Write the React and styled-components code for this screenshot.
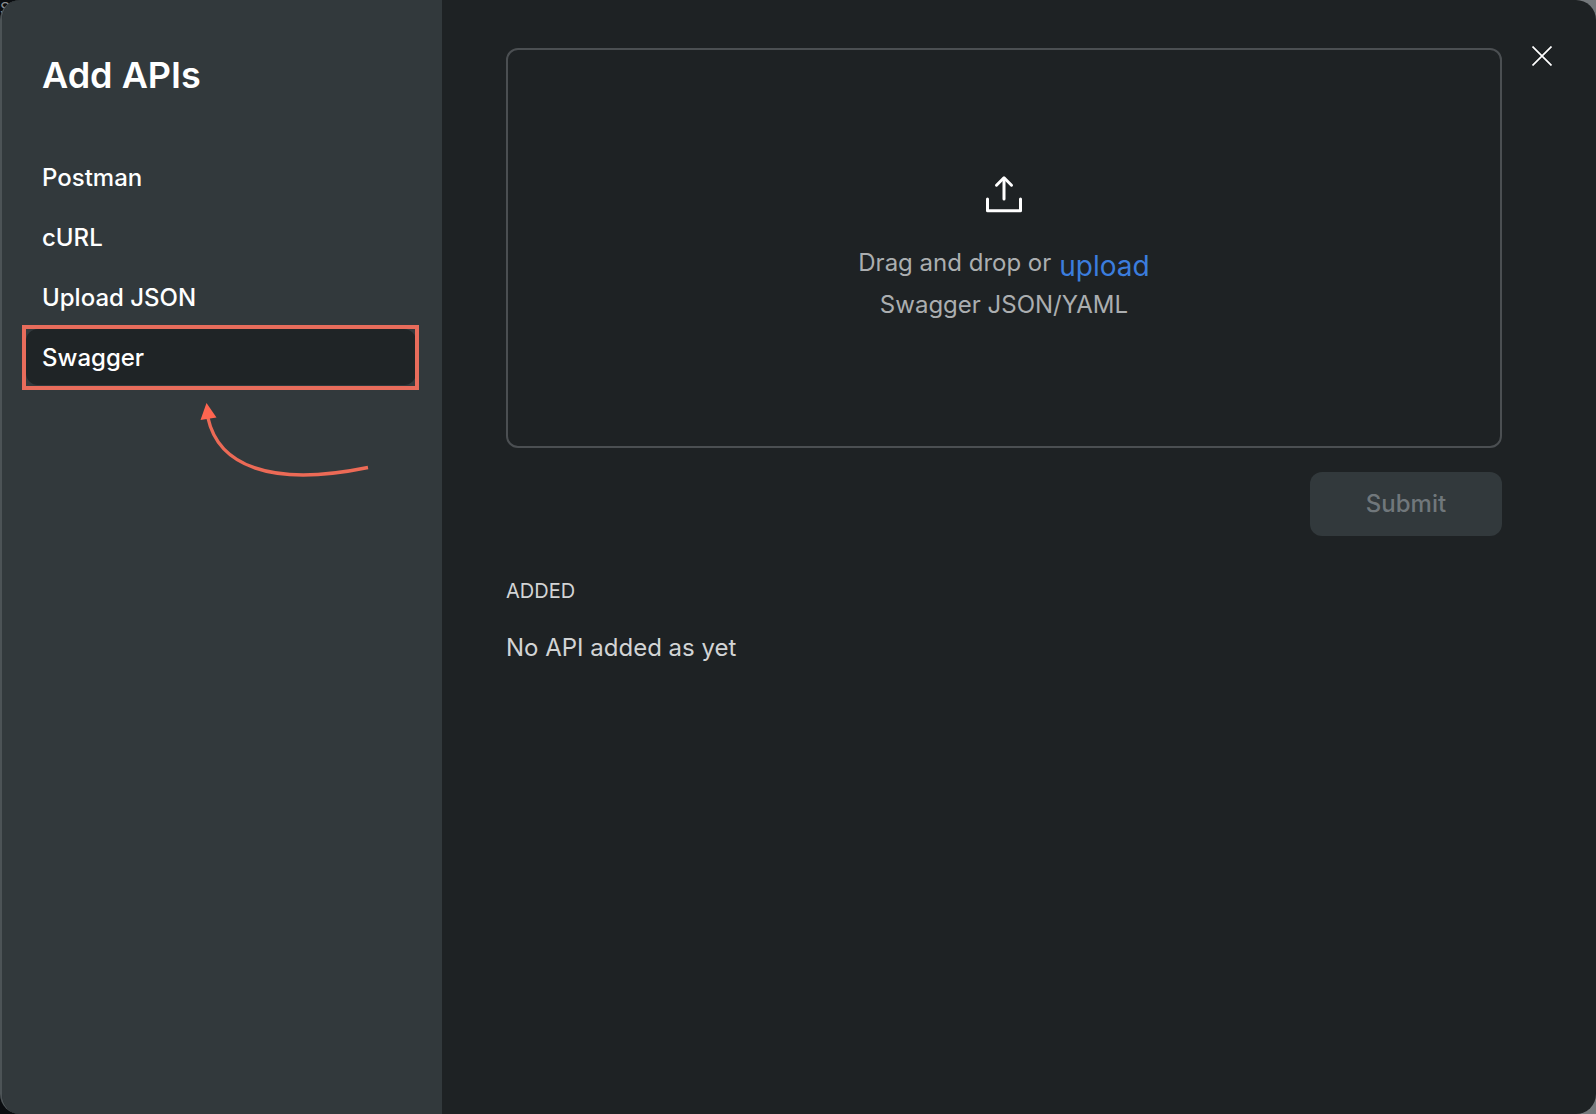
import React, { useState } from "react";
import styled, { createGlobalStyle } from "styled-components";

const sources = ["Postman", "cURL", "Upload JSON", "Swagger"];

const App = () => {
  const [active, setActive] = useState("Swagger");

  return (
    <Backdrop>
      <GlobalStyle />
      <PageText aria-hidden="true">S</PageText>
      <Modal role="dialog" aria-label="Add APIs">
        <Sidebar>
          <Title>Add APIs</Title>
          <Menu>
            {sources.map((source) => (
              <MenuItem key={source}>
                <MenuBtn
                  type="button"
                  $active={source === active}
                  onClick={() => setActive(source)}
                >
                  {source}
                </MenuBtn>
                {source === active && <Callout />}
              </MenuItem>
            ))}
          </Menu>
        </Sidebar>

        <Content>
          <Main>
            <DropZone>
              <UploadIcon />
              <DropText>
                <DropLine>
                  <span>Drag and drop or</span>
                  <UploadBtn type="button">upload</UploadBtn>
                </DropLine>
                <span>Swagger JSON/YAML</span>
              </DropText>
            </DropZone>
            <Submit type="submit" disabled>
              Submit
            </Submit>
            <AddedTitle>ADDED</AddedTitle>
            <AddedText>No API added as yet</AddedText>
          </Main>
          <CloseBtn type="button" aria-label="Close">
            <svg width="20" height="20" viewBox="0 0 20 20">
              <path d="M0.5 0.5L19.5 19.5M19.5 0.5L0.5 19.5" stroke="#fff" strokeWidth="1.7" />
            </svg>
          </CloseBtn>
        </Content>
      </Modal>
    </Backdrop>
  );
};

const UploadIcon = () => (
  <svg width="44" height="44" viewBox="0 0 44 44" fill="none" stroke="#fff" strokeWidth="3" strokeLinecap="round" strokeLinejoin="round">
    <path d="M5.5 26V37.8H38.5V26" />
    <path d="M22 26V5.5" />
    <path d="M14.5 12.2L22 4.8L29.5 12.2" />
  </svg>
);

// red frame and arrow around the selected source
const Callout = () => (
  <>
    <Frame />
    <Arrow width="170" height="80" viewBox="0 0 170 80">
      <path d="M168 67.5C68 88 18 64 8 18" fill="none" stroke="#ec6a56" strokeWidth="3.4" />
      <path d="M6.5 3L0.5 20L16.5 17.5Z" fill="#ff6550" />
    </Arrow>
  </>
);

const GlobalStyle = createGlobalStyle`
  * {
    box-sizing: border-box;
  }
  body {
    margin: 0;
    font-family: Inter, "Liberation Sans", sans-serif;
    font-size: 24px;
    color: #fff;
  }
  button {
    font: inherit;
    border: none;
    cursor: pointer;
  }
`;

const Backdrop = styled.div`
  position: relative;
  min-height: 100vh;
  display: flex;
  background: linear-gradient(90deg, #0a0d10 50%, #75797c 50%);
`;

const PageText = styled.span`
  position: absolute;
  top: 0;
  left: 0;
  font-size: 16px;
  line-height: 16px;
  color: #8a8e91;
`;

const Modal = styled.div`
  position: relative;
  flex: 1;
  display: flex;
  overflow: hidden;
  border-left: 2px solid #4c5356;
  border-radius: 20px;
  background: #1e2224;
`;

const Sidebar = styled.aside`
  width: 440px;
  flex-shrink: 0;
  padding: 53px 26px 0 24px;
  background: #32393c;
`;

const Title = styled.h1`
  margin: 0 0 52px;
  padding-left: 16px;
  font-size: 36px;
  line-height: 44px;
  font-weight: 600;
`;

const Menu = styled.ul`
  list-style: none;
  margin: 0;
  padding: 0;
  display: flex;
  flex-direction: column;
  gap: 4px;
`;

const MenuItem = styled.li`
  position: relative;
`;

const MenuBtn = styled.button`
  display: block;
  width: 100%;
  height: 56px;
  padding: 0 16px;
  border-radius: 12px;
  text-align: left;
  font-weight: 500;
  color: #fff;
  background: ${({ $active }) => ($active ? "#1f2426" : "transparent")};
`;

const Frame = styled.div`
  position: absolute;
  inset: -4px -3px -5px -4px;
  border: 4px solid #e86c5b;
  pointer-events: none;
`;

const Arrow = styled.svg`
  position: absolute;
  top: 71px;
  left: 174px;
  pointer-events: none;
`;

const Content = styled.section`
  flex: 1;
  display: flex;
  align-items: flex-start;
  gap: 30px;
  padding: 48px 44px 48px 64px;
`;

const Main = styled.div`
  flex: 1;
  display: flex;
  flex-direction: column;
`;

const DropZone = styled.div`
  min-height: 400px;
  display: flex;
  flex-direction: column;
  align-items: center;
  justify-content: center;
  gap: 28px;
  border: 2px solid #4b4f52;
  border-radius: 12px;
`;

const DropText = styled.div`
  display: flex;
  flex-direction: column;
  align-items: center;
  line-height: 36px;
  color: #abaeb0;
`;

const DropLine = styled.div`
  display: flex;
  align-items: flex-start;
  gap: 8px;
`;

const UploadBtn = styled.button`
  padding: 0;
  font-size: 28px;
  line-height: 42px;
  color: #3b7ddd;
  background: none;
`;

const Submit = styled.button`
  align-self: flex-end;
  width: 192px;
  height: 64px;
  margin-top: 24px;
  padding: 0 0 2px;
  border-radius: 12px;
  font-weight: 500;
  color: #70777b;
  background: #32393c;
  cursor: default;
`;

const AddedTitle = styled.h2`
  margin: 40px 0 0;
  font-size: 20px;
  line-height: 30px;
  font-weight: 400;
  color: #d2d4d5;
`;

const AddedText = styled.p`
  margin: 24px 0 0;
  line-height: 36px;
  color: #d2d4d5;
`;

const CloseBtn = styled.button`
  display: flex;
  margin-top: -2px;
  padding: 0;
  background: none;
`;

export default App;
